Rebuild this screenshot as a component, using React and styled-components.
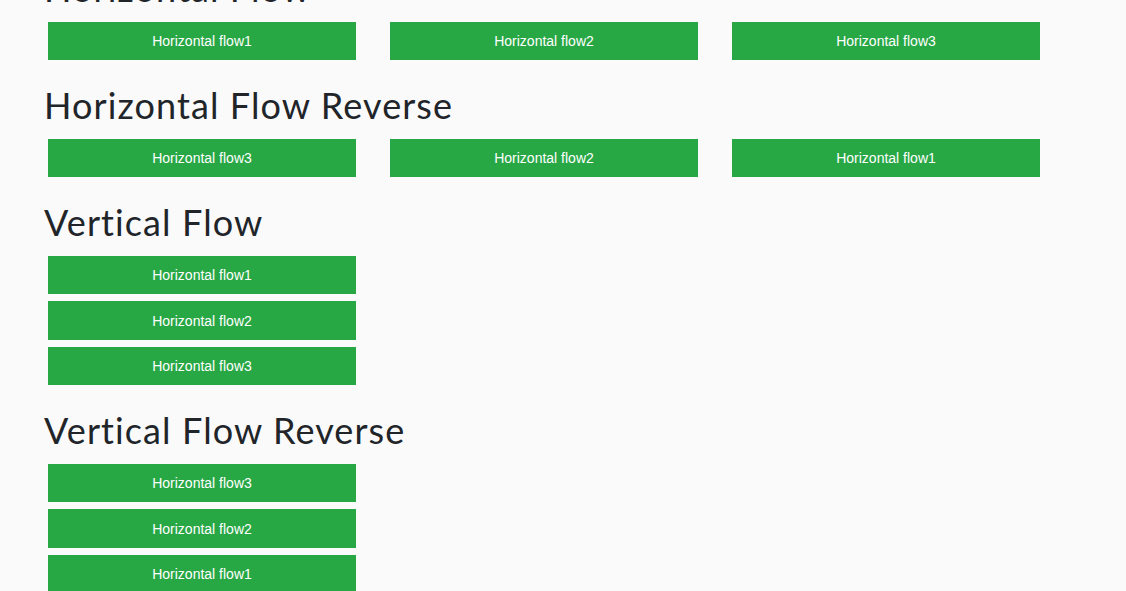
import React from 'react';
import styled, { createGlobalStyle } from 'styled-components';

const GlobalStyle = createGlobalStyle`
    html, body {
        margin: 0;
        padding: 0;
        background-color: #fafafa;
        overflow: hidden;
    }
`

const Page = styled.div`
    margin-top: -33px;
    padding-left: 44px;
    display: flex;
    flex-direction: column;
`

const Section = styled.section`
    display: flex;
    flex-direction: column;
    margin-bottom: 23.5px;
`

const Title = styled.h2`
    margin: 0 0 12px 0;
    font-family: Lato, "Open Sans", sans-serif;
    font-weight: 400;
    font-size: 36px;
    letter-spacing: 1.1px;
    line-height: 43px;
    color: #212529;
`

const Flow = styled.div`
    display: flex;
    flex-direction: ${({ direction }) => direction};
    justify-content: flex-end;
    align-self: flex-start;
    gap: ${({ direction }) => (direction.startsWith('row') ? '34px' : '7.2px')};
    padding-left: 4px;
`

const FlowItem = styled.div`
    width: 308px;
    height: 38.4px;
    background-color: #28a745;
    color: #ffffff;
    font-family: "Liberation Sans", Arial, sans-serif;
    font-size: 14px;
    display: flex;
    align-items: center;
    justify-content: center;
`

const items = ['Horizontal flow1', 'Horizontal flow2', 'Horizontal flow3'];

const sections = [
    { title: 'Horizontal Flow', direction: 'row' },
    { title: 'Horizontal Flow Reverse', direction: 'row-reverse' },
    { title: 'Vertical Flow', direction: 'column' },
    { title: 'Vertical Flow Reverse', direction: 'column-reverse' },
];

const App = () => {
    return (
        <>
            <GlobalStyle />
            <Page>
                {sections.map((section) => (
                    <Section key={section.title}>
                        <Title>{section.title}</Title>
                        <Flow direction={section.direction}>
                            {items.map((item) => (
                                <FlowItem key={item}>{item}</FlowItem>
                            ))}
                        </Flow>
                    </Section>
                ))}
            </Page>
        </>
    )
}

export default App;
